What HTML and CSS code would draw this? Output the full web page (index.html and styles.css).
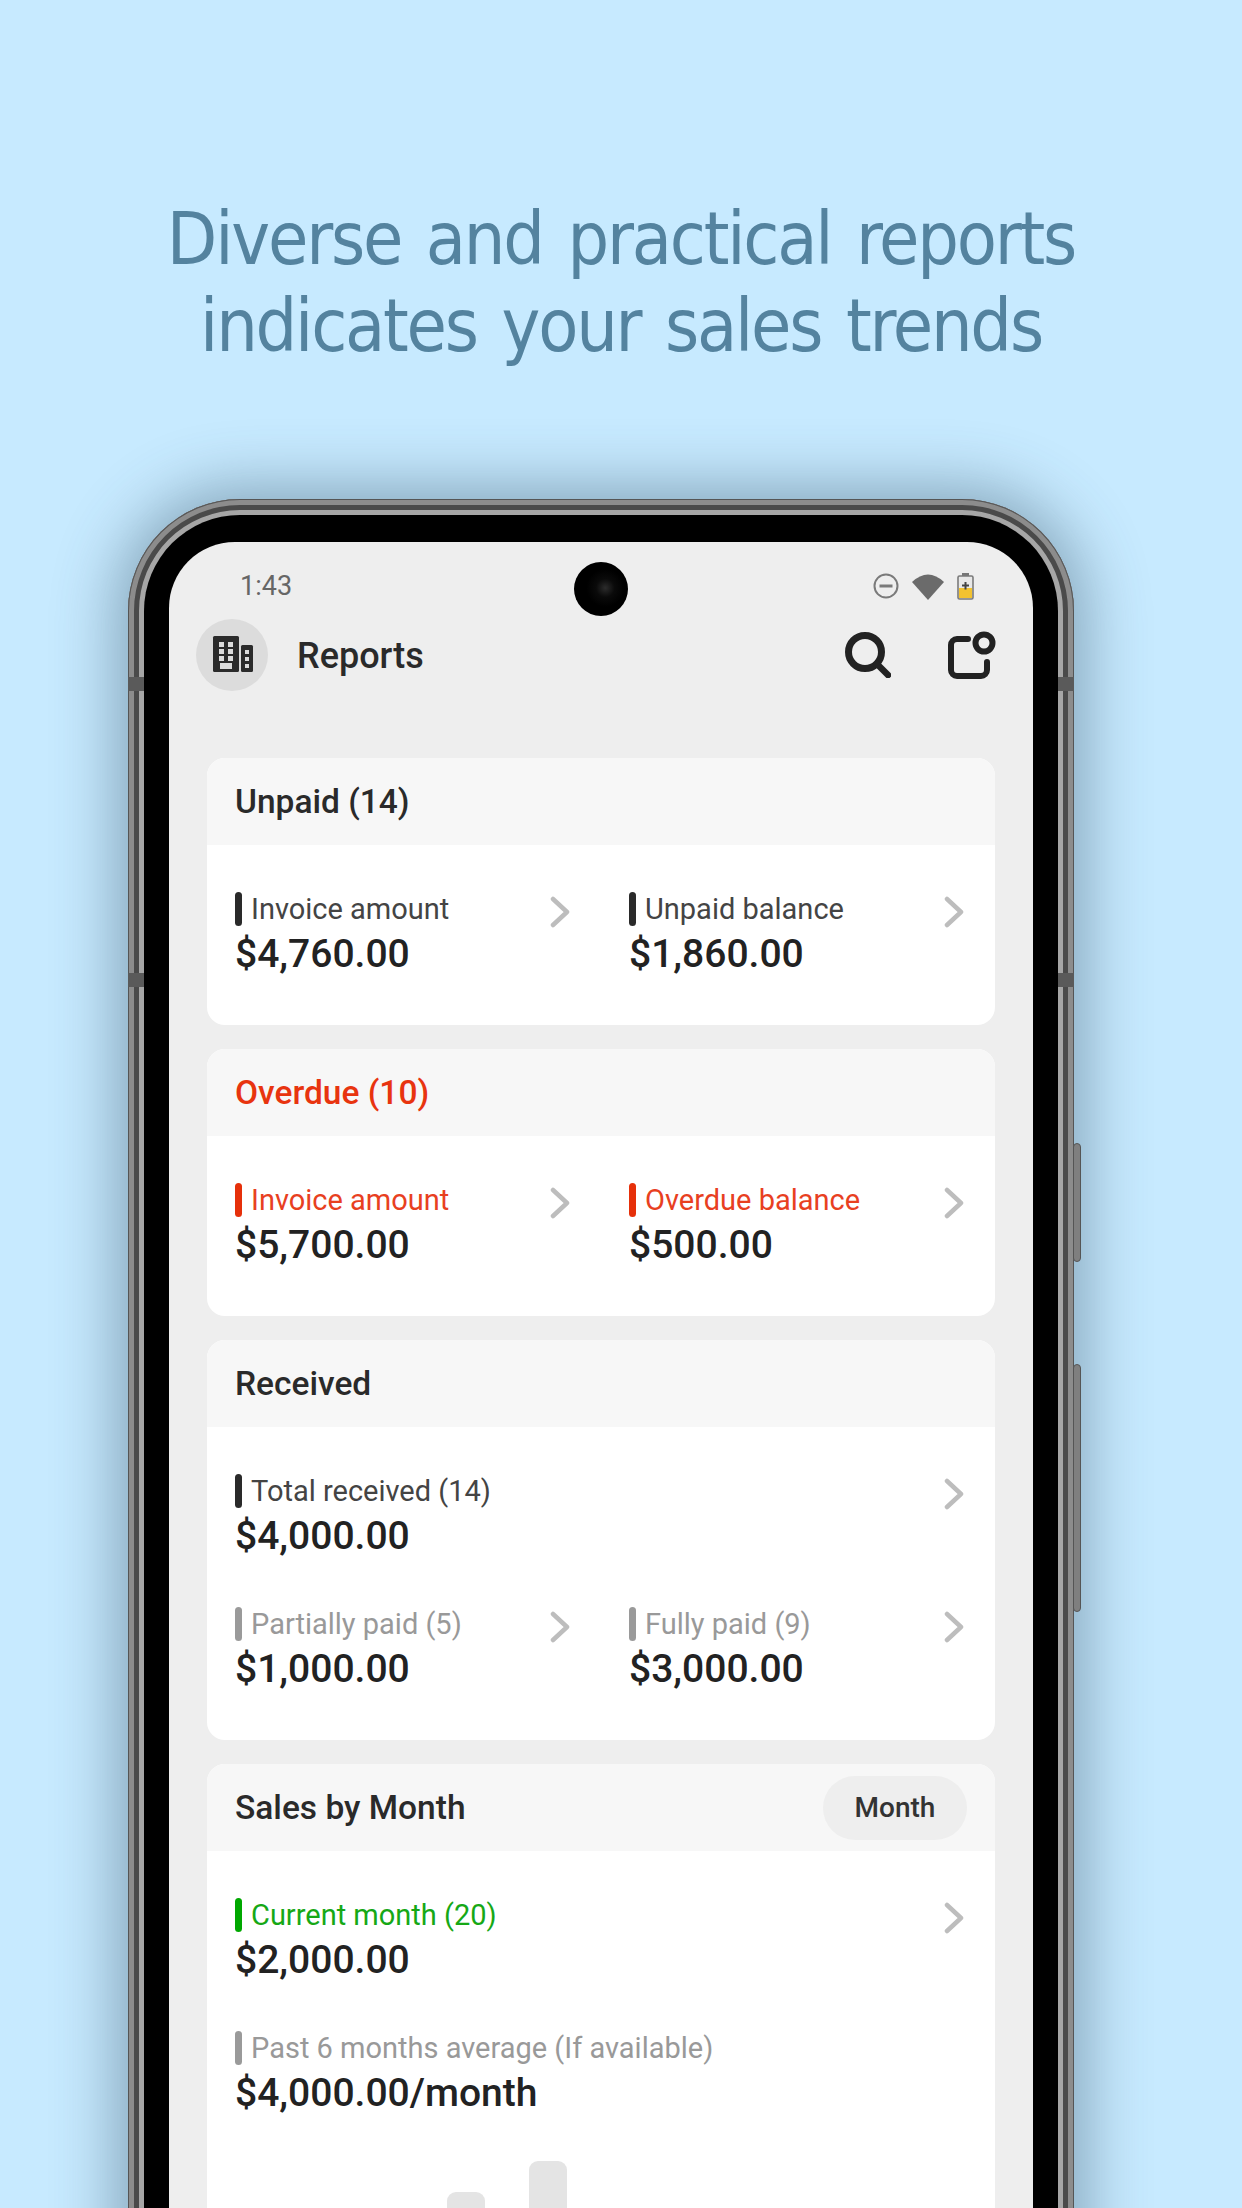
FILE: index.html
```html
<!DOCTYPE html>
<html lang="en">
<head>
  <meta charset="UTF-8">
  <title>Reports</title>
  <link rel="stylesheet" href="styles.css">
</head>
<body>
  <h1 class="headline">Diverse and practical reports<br>indicates your sales trends</h1>

  <div class="phone">
    <span class="nub nub-a"></span>
    <span class="nub nub-b"></span>
    <span class="nub nub-c"></span>
    <span class="nub nub-d"></span>
    <span class="side-btn side-power"></span>
    <span class="side-btn side-volume"></span>

    <div class="bezel">
      <div class="screen">
        <div class="camera"></div>

        <div class="status">
          <span class="time">1:43</span>
          <div class="status-icons">
            <svg width="26" height="26" viewBox="0 0 26 26">
              <circle cx="13" cy="13" r="11.5" fill="none" stroke="#7a7a7a" stroke-width="2"/>
              <rect x="6.5" y="11.5" width="13" height="3" fill="#7a7a7a"/>
            </svg>
            <svg width="32" height="27" viewBox="0 0 32 27">
              <path d="M0 9 Q16 -6 32 9 L16 27 Z" fill="#6b6b6b"/>
            </svg>
            <svg width="17" height="27" viewBox="0 0 17 27">
              <rect x="5" y="0" width="7" height="3" fill="#777"/>
              <rect x="1" y="3" width="15" height="23" rx="1.5" fill="#e8e8e8" stroke="#7a7a7a" stroke-width="1.6"/>
              <rect x="2" y="15" width="13" height="10" fill="#f2c230"/>
              <path d="M7.5 9 h2 v2.5 h2.5 v2 h-2.5 v3 h-2 v-3 h-2.5 v-2 h2.5 z" fill="#444"/>
            </svg>
          </div>
        </div>

        <div class="appbar">
          <div class="avatar">
            <svg width="72" height="72" viewBox="0 0 72 72">
              <rect class="ink" x="17" y="17" width="26" height="36" rx="1.5"/>
              <rect class="ink" x="45" y="26" width="12" height="27" rx="1.5"/>
              <rect class="hole" x="23" y="23" width="5" height="5"/>
              <rect class="hole" x="32" y="23" width="5" height="5"/>
              <rect class="hole" x="23" y="30" width="5" height="5"/>
              <rect class="hole" x="32" y="30" width="5" height="5"/>
              <rect class="hole" x="23" y="37" width="5" height="5"/>
              <rect class="hole" x="32" y="37" width="5" height="5"/>
              <rect class="hole" x="24" y="44" width="12" height="6"/>
              <rect class="hole" x="49" y="31" width="4" height="4"/>
              <rect class="hole" x="49" y="38" width="4" height="4"/>
              <rect class="hole" x="49" y="45" width="4" height="4"/>
            </svg>
          </div>
          <span class="appbar-title">Reports</span>
          <svg class="search-icon" width="46" height="46" viewBox="0 0 46 46">
            <circle cx="20" cy="20" r="16.5" fill="none" stroke="#222" stroke-width="7"/>
            <line x1="32" y1="32" x2="43" y2="43" stroke="#222" stroke-width="6.5" stroke-linecap="round"/>
          </svg>
          <svg class="add-icon" width="49" height="48" viewBox="0 0 49 48">
            <path d="M21 8 H10 a6 6 0 0 0 -6 6 V39 a6 6 0 0 0 6 6 H34 a6 6 0 0 0 6 -6 V31" fill="none" stroke="#222" stroke-width="6" stroke-linecap="round"/>
            <circle cx="37" cy="12" r="8.5" fill="none" stroke="#222" stroke-width="6"/>
          </svg>
        </div>

        <section class="card">
          <div class="card-head">Unpaid (14)</div>
          <div class="card-body">
            <div class="row">
              <div class="cell">
                <div>
                  <div class="label">Invoice amount</div>
                  <div class="amount">$4,760.00</div>
                </div>
                <svg class="chev" width="20" height="32" viewBox="0 0 20 32"><polyline points="3,3 17,16 3,29"/></svg>
              </div>
              <div class="cell">
                <div>
                  <div class="label">Unpaid balance</div>
                  <div class="amount">$1,860.00</div>
                </div>
                <svg class="chev" width="20" height="32" viewBox="0 0 20 32"><polyline points="3,3 17,16 3,29"/></svg>
              </div>
            </div>
          </div>
        </section>

        <section class="card">
          <div class="card-head red">Overdue (10)</div>
          <div class="card-body">
            <div class="row">
              <div class="cell">
                <div>
                  <div class="label red">Invoice amount</div>
                  <div class="amount">$5,700.00</div>
                </div>
                <svg class="chev" width="20" height="32" viewBox="0 0 20 32"><polyline points="3,3 17,16 3,29"/></svg>
              </div>
              <div class="cell">
                <div>
                  <div class="label red">Overdue balance</div>
                  <div class="amount">$500.00</div>
                </div>
                <svg class="chev" width="20" height="32" viewBox="0 0 20 32"><polyline points="3,3 17,16 3,29"/></svg>
              </div>
            </div>
          </div>
        </section>

        <section class="card">
          <div class="card-head">Received</div>
          <div class="card-body">
            <div class="row">
              <div class="cell">
                <div>
                  <div class="label">Total received (14)</div>
                  <div class="amount">$4,000.00</div>
                </div>
                <svg class="chev" width="20" height="32" viewBox="0 0 20 32"><polyline points="3,3 17,16 3,29"/></svg>
              </div>
            </div>
            <div class="row">
              <div class="cell">
                <div>
                  <div class="label grey">Partially paid (5)</div>
                  <div class="amount">$1,000.00</div>
                </div>
                <svg class="chev" width="20" height="32" viewBox="0 0 20 32"><polyline points="3,3 17,16 3,29"/></svg>
              </div>
              <div class="cell">
                <div>
                  <div class="label grey">Fully paid (9)</div>
                  <div class="amount">$3,000.00</div>
                </div>
                <svg class="chev" width="20" height="32" viewBox="0 0 20 32"><polyline points="3,3 17,16 3,29"/></svg>
              </div>
            </div>
          </div>
        </section>

        <section class="card">
          <div class="card-head">
            <span>Sales by Month</span>
            <span class="pill">Month</span>
          </div>
          <div class="card-body">
            <div class="row">
              <div class="cell">
                <div>
                  <div class="label green">Current month (20)</div>
                  <div class="amount">$2,000.00</div>
                </div>
                <svg class="chev" width="20" height="32" viewBox="0 0 20 32"><polyline points="3,3 17,16 3,29"/></svg>
              </div>
            </div>
            <div class="row">
              <div class="cell">
                <div>
                  <div class="label grey">Past 6 months average (If available)</div>
                  <div class="amount">$4,000.00/month</div>
                </div>
              </div>
            </div>
            <div class="chart">
              <div class="bar bar-short"></div>
              <div class="bar bar-tall"></div>
            </div>
          </div>
        </section>
      </div>
    </div>
  </div>
</body>
</html>
```

FILE: styles.css
```css
html, body {
  margin: 0;
  height: 2208px;
  overflow: hidden;
}
body {
  background-color: #c7eaff;
  font-family: Roboto, "Liberation Sans", sans-serif;
}
.headline {
  margin: 0;
  height: 499px;
  padding-top: 195px;
  box-sizing: border-box;
  text-align: center;
  font-family: "DejaVu Sans Condensed", "DejaVu Sans", sans-serif;
  font-size: 73px;
  line-height: 87px;
  font-weight: normal;
  letter-spacing: -2.2px;
  word-spacing: 6px;
  color: #54839f;
}

/* phone body */
.phone {
  position: relative;
  width: 946px;
  margin-left: 128px;
  padding: 16px;
  box-sizing: border-box;
  border-radius: 112px;
  background-color: #a6a6a6;
  box-shadow: inset 0 0 0 1px #555, inset 0 0 0 6px #8c8c8c, inset 0 0 0 11px #4a4a4a, 0 0 62px 12px rgba(50, 80, 100, .44);
}
.nub {
  position: absolute;
  width: 16px;
  height: 14px;
  background-color: #5a5a5a;
}
.nub-a { left: 0; top: 178px; }
.nub-b { left: 0; top: 474px; }
.nub-c { right: 0; top: 178px; }
.nub-d { right: 0; top: 474px; }
.side-btn {
  position: absolute;
  right: -7px;
  width: 8px;
  background-color: #7f7f7f;
  border: 1px solid #555;
  border-radius: 4px;
  box-sizing: border-box;
}
.side-power { top: 644px; height: 119px; }
.side-volume { top: 865px; height: 248px; }
.bezel {
  padding: 27px 25px 0;
  border-radius: 96px;
  background-color: #000;
}
.screen {
  position: relative;
  height: 1800px;
  border-radius: 66px 66px 0 0;
  background-color: #eee;
  overflow: hidden;
}
.camera {
  position: absolute;
  left: 405px;
  top: 20px;
  width: 54px;
  height: 54px;
  border-radius: 50%;
  background: radial-gradient(circle at 58% 48%, #2c2c2c 0, #0a0a0a 22%, #000 45%);
}

/* status + app bar */
.status {
  height: 77px;
  padding: 11px 59px 0 71px;
  display: flex;
  justify-content: space-between;
  align-items: center;
  box-sizing: border-box;
}
.time {
  font-size: 27px;
  color: #666;
}
.status-icons {
  display: flex;
  align-items: center;
  gap: 13px;
}
.appbar {
  height: 72px;
  margin-bottom: 67px;
  padding: 0 37px 0 27px;
  display: flex;
  align-items: center;
}
.avatar {
  width: 72px;
  height: 72px;
  border-radius: 50%;
  background-color: #dcdcdc;
}
.avatar .ink { fill: #2b2b2b; }
.avatar .hole { fill: #dcdcdc; }
.appbar-title {
  margin: 2px 0 0 29px;
  flex: 1;
  font-size: 36px;
  font-weight: 500;
  color: #2a2a2a;
}
.search-icon { margin-right: 56px; }

/* cards */
.card {
  margin: 0 38px 24px 38px;
  border-radius: 18px;
  background-color: #fff;
  overflow: hidden;
}
.card-head {
  height: 87px;
  padding: 0 28px;
  display: flex;
  justify-content: space-between;
  align-items: center;
  background-color: #f7f7f7;
  font-size: 33.5px;
  font-weight: 500;
  color: #2a2a2a;
}
.card-head.red { color: #e8340f; }
.pill {
  width: 144px;
  height: 64px;
  border-radius: 32px;
  display: flex;
  justify-content: center;
  align-items: center;
  background-color: #eee;
  font-size: 28px;
  color: #333;
}
.card-body {
  padding-top: 47px;
}
.row {
  height: 133px;
  display: flex;
}
.cell {
  flex: 1;
  padding: 0 31px 0 28px;
  display: flex;
  justify-content: space-between;
  align-items: flex-start;
}
.label {
  height: 34px;
  display: flex;
  align-items: center;
  font-size: 29px;
  color: #444;
}
.label::before {
  content: "";
  width: 7px;
  height: 34px;
  margin-right: 9px;
  border-radius: 4px;
  background-color: #2a2a2a;
}
.label.red { color: #e8401f; }
.label.red::before { background-color: #e6300a; }
.label.grey { color: #999; }
.label.grey::before { background-color: #9a9a9a; }
.label.green { color: #16a816; }
.label.green::before { background-color: #00a800; }
.amount {
  margin-top: 6px;
  font-size: 39px;
  line-height: 44px;
  font-weight: 500;
  color: #222;
}
.chev {
  margin-top: 4px;
  fill: none;
  stroke: #bdbdbd;
  stroke-width: 4.5;
  stroke-linecap: round;
  stroke-linejoin: round;
}

/* chart peeking out at the bottom */
.chart {
  height: 100px;
  margin-top: -3px;
  padding-left: 240px;
  display: flex;
  align-items: flex-end;
  gap: 44px;
}
.bar {
  width: 38px;
  border-radius: 9px 9px 0 0;
  background-color: #e4e4e4;
}
.bar-short { height: 69px; }
.bar-tall { height: 100px; }
```
